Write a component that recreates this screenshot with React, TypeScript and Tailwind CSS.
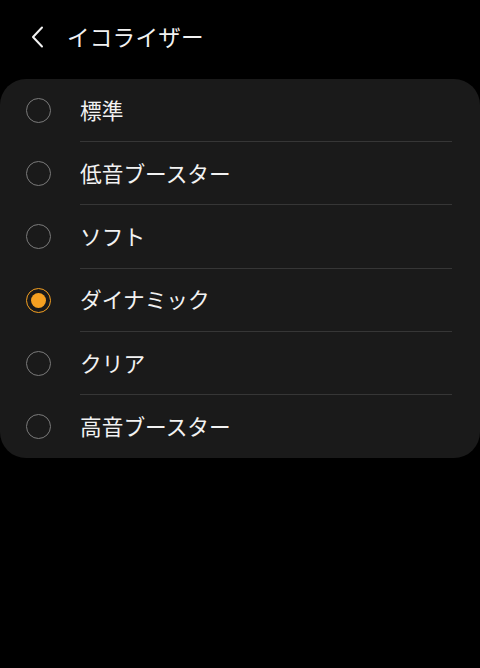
import { useState } from 'react';

const options = ['標準', '低音ブースター', 'ソフト', 'ダイナミック', 'クリア', '高音ブースター'];

const font = { fontFamily: '"Noto Sans CJK JP", "Noto Sans", sans-serif' };

function Radio({ checked }: { checked: boolean }) {
  if (checked) {
    return (
      <span className="flex h-[25px] w-[25px] items-center justify-center rounded-full border-[1.5px] border-[#f5a021]">
        <span className="h-[15px] w-[15px] rounded-full bg-[#f5a021]" />
      </span>
    );
  }
  return <span className="block h-[25px] w-[25px] rounded-full border-[1.5px] border-[#7a7a7a]" />;
}

export default function App() {
  const [selected, setSelected] = useState(3);

  return (
    <div className="min-h-[668px] w-[480px] bg-black text-[#f2f2f2]" style={font}>
      <div className="flex h-[79px] items-center pb-[6px]">
        <button className="ml-[28px] flex h-[24px] w-[18px] items-center justify-center">
          <svg width="16" height="24" viewBox="0 0 16 24" fill="none">
            <path d="M13 2.5 L4 12 L13 21.5" stroke="#f2f2f2" strokeWidth="2" strokeLinecap="round" strokeLinejoin="round" />
          </svg>
        </button>
        <h1 className="ml-[21px] text-[22.6px] tracking-[0.2px]">イコライザー</h1>
      </div>

      <div className="rounded-[26px] bg-[#1a1a1a]">
        {options.map((label, i) => (
          <button
            key={label}
            onClick={() => setSelected(i)}
            className="flex h-[63.2px] w-full items-center text-left"
          >
            <span className="flex w-[80px] justify-center pr-[3px]">
              <Radio checked={selected === i} />
            </span>
            <span
              className={
                'flex h-full flex-1 items-center mr-[28px] ' +
                (i < options.length - 1 ? 'border-b border-[#363636]' : '')
              }
            >
              <span className="text-[21.7px]">{label}</span>
            </span>
          </button>
        ))}
      </div>
    </div>
  );
}
